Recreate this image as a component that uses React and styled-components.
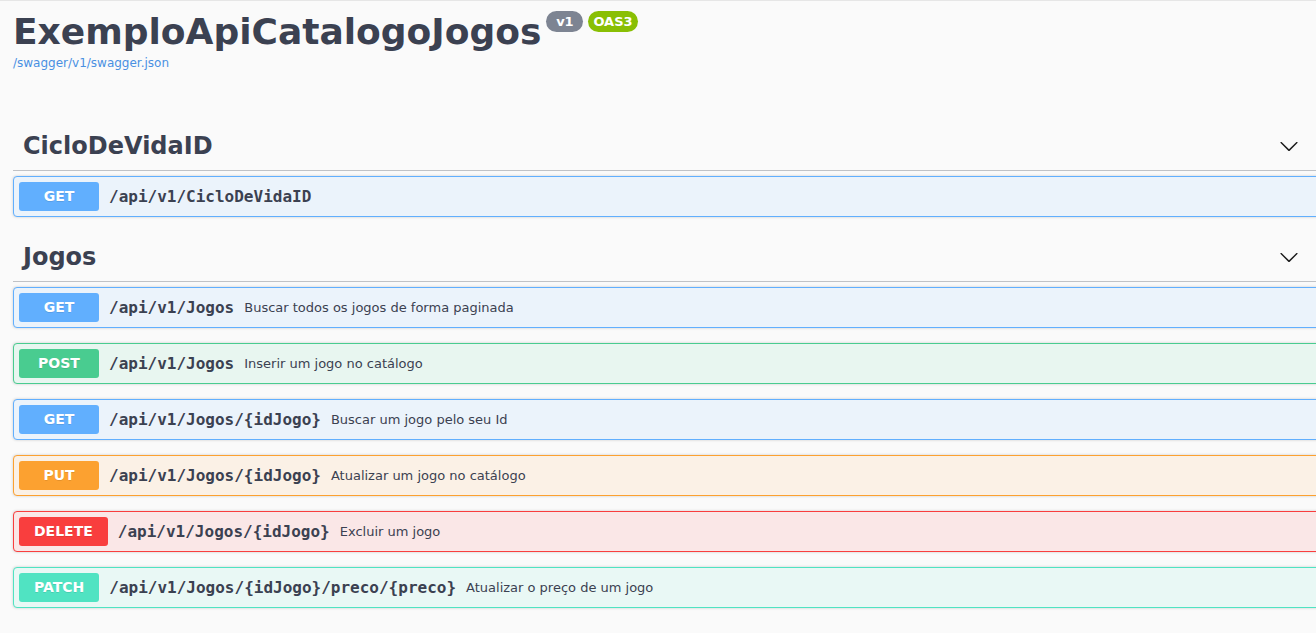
import React from 'react';
import styled, { createGlobalStyle } from 'styled-components';

const GlobalStyle = createGlobalStyle`
  html, body {
    margin: 0;
    padding: 0;
    background: #fafafa;
    overflow-x: hidden;
  }
  body {
    font-family: "DejaVu Sans", sans-serif;
    color: #3b4151;
    border-top: 1px solid #e6e6e6;
  }
`;

const methodColors = {
  GET: '#61affe',
  POST: '#49cc90',
  PUT: '#fca130',
  DELETE: '#f93e3e',
  PATCH: '#50e3c2'
};

const blockBg = {
  GET: '#ebf3fb',
  POST: '#e8f6f0',
  PUT: '#fbf1e6',
  DELETE: '#fae7e7',
  PATCH: '#e9f8f5'
};

const tags = [
  {
    name: 'CicloDeVidaID',
    ops: [{ method: 'GET', path: '/api/v1/CicloDeVidaID', desc: '' }]
  },
  {
    name: 'Jogos',
    ops: [
      { method: 'GET', path: '/api/v1/Jogos', desc: 'Buscar todos os jogos de forma paginada' },
      { method: 'POST', path: '/api/v1/Jogos', desc: 'Inserir um jogo no catálogo' },
      { method: 'GET', path: '/api/v1/Jogos/{idJogo}', desc: 'Buscar um jogo pelo seu Id' },
      { method: 'PUT', path: '/api/v1/Jogos/{idJogo}', desc: 'Atualizar um jogo no catálogo' },
      { method: 'DELETE', path: '/api/v1/Jogos/{idJogo}', desc: 'Excluir um jogo' },
      { method: 'PATCH', path: '/api/v1/Jogos/{idJogo}/preco/{preco}', desc: 'Atualizar o preço de um jogo' }
    ]
  }
];

const Arrow = () => (
  <svg width="20" height="20" viewBox="0 0 20 20" aria-hidden="true">
    <path
      fill="#1a1a1a"
      d="M17.418 6.109c.272-.268.709-.268.979 0s.271.701 0 .969l-7.908 7.83c-.27.268-.707.268-.979 0l-7.908-7.83c-.27-.268-.27-.701 0-.969.271-.268.709-.268.979 0L10 13.25l7.418-7.141z"
    />
  </svg>
);

const App = () => {
  return (
    <S.Wrapper>
      <GlobalStyle />
      <S.Info>
        <S.TitleRow>
          <S.Title>ExemploApiCatalogoJogos</S.Title>
          <S.Version $bg="#7d8492">v1</S.Version>
          <S.Version $bg="#89bf04">OAS3</S.Version>
        </S.TitleRow>
        <S.SpecLink>/swagger/v1/swagger.json</S.SpecLink>
      </S.Info>

      {tags.map((tag) => (
        <section key={tag.name}>
          <S.TagHeader>
            <span>{tag.name}</span>
            <Arrow />
          </S.TagHeader>
          {tag.ops.map((op, i) => (
            <S.Block key={i} $method={op.method}>
              <S.Method $method={op.method}>{op.method}</S.Method>
              <S.Path>{op.path}</S.Path>
              {op.desc && <S.Desc>{op.desc}</S.Desc>}
            </S.Block>
          ))}
        </section>
      ))}
    </S.Wrapper>
  );
};

export default App;

const S = {
  Wrapper: styled.div`
    padding: 0 0 0 13px;
    margin-right: -8px;
  `,

  Info: styled.div`
    padding-top: 9px;
    height: 111px;
  `,

  TitleRow: styled.div`
    display: flex;
    align-items: flex-start;
    gap: 5px;
  `,

  Title: styled.h2`
    margin: 0;
    font-size: 36px;
    font-weight: bold;
    line-height: 44px;
    color: #3b4151;
  `,

  Version: styled.span`
    margin-top: 1px;
    min-width: 27px;
    height: 21px;
    padding: 0 5px;
    border-radius: 57px;
    background: ${(p) => p.$bg};
    color: #fff;
    font-size: 13px;
    font-weight: bold;
    line-height: 21px;
    text-align: center;
  `,

  SpecLink: styled.a`
    display: block;
    margin-top: 1px;
    font-size: 12px;
    line-height: 16px;
    color: #4990e2;
    text-decoration: none;
  `,

  TagHeader: styled.h3`
    display: flex;
    align-items: center;
    justify-content: space-between;
    height: 29px;
    margin: 0 0 5px;
    padding: 10px 25px 10px 10px;
    border-bottom: 1px solid rgba(59, 65, 81, 0.3);
    font-size: 24px;
    font-weight: bold;
    color: #3b4151;
  `,

  Block: styled.div`
    display: flex;
    align-items: center;
    margin: 0 0 15px;
    padding: 5px;
    border: 1px solid ${(p) => methodColors[p.$method]};
    border-radius: 4px;
    background: ${(p) => blockBg[p.$method]};
    box-shadow: 0 0 3px rgba(0, 0, 0, 0.19);
  `,

  Method: styled.span`
    box-sizing: border-box;
    min-width: 80px;
    padding: 6px 15px;
    border-radius: 3px;
    background: ${(p) => methodColors[p.$method]};
    color: #fff;
    font-size: 14px;
    font-weight: bold;
    line-height: 17px;
    text-align: center;
    text-shadow: 0 1px 0 rgba(0, 0, 0, 0.1);
  `,

  Path: styled.span`
    padding: 0 10px;
    font-family: "DejaVu Sans Mono", monospace;
    font-size: 16px;
    font-weight: bold;
    color: #3b4151;
  `,

  Desc: styled.span`
    font-size: 13px;
    color: #3b4151;
  `
};
